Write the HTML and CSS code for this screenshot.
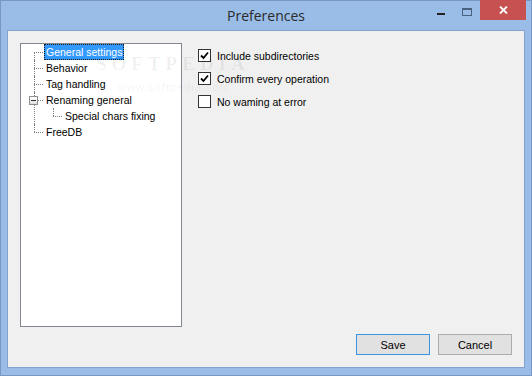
FILE: index.html
```html
<!DOCTYPE html>
<html lang="en">
  <head>
    <meta charset="UTF-8" />
    <title>Preferences</title>
    <link rel="stylesheet" href="styles.css">
  </head>
  <body>
    <div class="window">
      <!-- Title bar -->
      <div class="titlebar">
        <div></div>
        <div class="title">Preferences</div>
        <div class="controls">
          <div class="ctl ctl-min"><span class="dash"></span></div>
          <div class="ctl ctl-max"><span class="box"></span></div>
          <div class="ctl ctl-close">
            <svg width="9" height="8" viewBox="0 0 9 8">
              <path d="M1 0.5 L8 7.5 M8 0.5 L1 7.5" stroke="#fff" stroke-width="1.8" fill="none" />
            </svg>
          </div>
        </div>
      </div>

      <!-- Client area -->
      <div class="client">
        <div class="main">
          <ul class="tree">
            <li><span class="label selected">General settings</span></li>
            <li><span class="label">Behavior</span></li>
            <li><span class="label">Tag handling</span></li>
            <li>
              <span class="toggle"></span>
              <span class="label">Renaming general</span>
              <ul class="subtree">
                <li><span class="label">Special chars fixing</span></li>
              </ul>
            </li>
            <li><span class="label">FreeDB</span></li>
          </ul>

          <div class="options">
            <label class="check"><span class="box checked"></span>Include subdirectories</label>
            <label class="check"><span class="box checked"></span>Confirm every operation</label>
            <label class="check"><span class="box"></span>No waming at error</label>
          </div>
        </div>

        <div class="buttons">
          <button class="btn default">Save</button>
          <button class="btn">Cancel</button>
        </div>

        <!-- watermark -->
        <div class="watermark">
          <div class="wm-big">SOFTPEDIA</div>
          <div class="wm-small">www.softpedia.com</div>
        </div>
      </div>
    </div>
  </body>
</html>
```

FILE: styles.css
```css
body {
  margin: 0;
  font-family: "Liberation Sans", Arial, sans-serif;
  font-size: 10.5px;
}
.window {
  width: 532px;
  height: 376px;
  box-sizing: border-box;
  border: 1px solid #7996c4;
  background: #99bde7;
  display: flex;
  flex-direction: column;
}
.titlebar {
  height: 29px;
  display: grid;
  grid-template-columns: 1fr auto 1fr;
}
.title {
  font-family: "Open Sans", "Noto Sans", sans-serif;
  font-size: 14px;
  color: #2b2b2b;
  line-height: 29px;
}
.controls {
  display: flex;
  justify-content: flex-end;
  align-items: flex-start;
  margin-right: 5px;
}
.ctl {
  width: 26px;
  height: 20px;
  display: flex;
  align-items: center;
  justify-content: center;
}
.ctl-min .dash {
  width: 8px;
  height: 2px;
  margin-top: 6px;
  background: #222;
}
.ctl-max .box {
  width: 8px;
  height: 5px;
  border: 1px solid #4a6280;
  border-top-width: 2px;
  margin-top: 1px;
}
.ctl-close {
  width: 46px;
  height: 20px;
  margin-top: -1px;
  background: #c75050;
}
.client {
  position: relative;
  margin: 0 6px;
  flex: 1;
  border: 1px solid #83a3cf;
  background: #f0f0f0;
  padding: 12px;
  display: flex;
  flex-direction: column;
  margin-bottom: 7px;
}
.main {
  display: flex;
  height: 284px;
}
.tree {
  width: 162px;
  height: 284px;
  box-sizing: border-box;
  border: 1px solid #828790;
  background: #fff;
  margin: 0;
  padding: 0 0 0 13px;
  list-style: none;
  color: #000;
}
.tree li {
  position: relative;
  padding-left: 10px;
}
.tree li::before {
  content: "";
  position: absolute;
  left: 0;
  top: 8px;
  width: 9px;
  border-top: 1px dotted #808080;
}
.tree > li::after {
  content: "";
  position: absolute;
  left: 0;
  top: 0;
  bottom: 0;
  border-left: 1px dotted #808080;
}
.tree > li:first-child::after {
  top: 8px;
}
.tree > li:last-child::after {
  bottom: auto;
  height: 8px;
}
.label {
  display: inline-block;
  height: 16px;
  line-height: 16px;
  padding: 0 2px;
  box-sizing: border-box;
}
.label.selected {
  background: #3399ff;
  color: #fff;
  outline: 1px dotted #1a1a1a;
  outline-offset: -1px;
}
.toggle {
  position: absolute;
  left: -5px;
  top: 4px;
  width: 9px;
  height: 9px;
  box-sizing: border-box;
  border: 1px solid #8e8f8f;
  background: linear-gradient(#fff, #e0e0e0);
  z-index: 1;
}
.toggle::after {
  content: "";
  position: absolute;
  left: 1px;
  top: 3px;
  width: 5px;
  height: 1px;
  background: #333;
}
.subtree {
  list-style: none;
  margin: 0 0 0 9px;
  padding: 0;
}
.subtree li::after {
  content: "";
  position: absolute;
  left: 0;
  top: 0;
  height: 8px;
  border-left: 1px dotted #808080;
}
.options {
  display: flex;
  flex-direction: column;
  gap: 10px;
  padding: 6px 0 0 16px;
}
.check {
  display: flex;
  align-items: center;
  gap: 6px;
  height: 13px;
  color: #000;
}
.check .box {
  width: 13px;
  height: 13px;
  box-sizing: border-box;
  border: 1px solid #333;
  background: #fff;
}
.check .box.checked {
  background: #fff url("data:image/svg+xml,%3Csvg xmlns='http://www.w3.org/2000/svg' width='11' height='11'%3E%3Cpath d='M2 5.5 L4.5 8 L9 2.5' stroke='%23000' stroke-width='1.8' fill='none'/%3E%3C/svg%3E") no-repeat center;
}
.buttons {
  display: flex;
  justify-content: flex-end;
  gap: 8px;
  margin-top: 7px;
}
.btn {
  width: 74px;
  height: 21px;
  font-family: "Liberation Sans", Arial, sans-serif;
  font-size: 11px;
  color: #000;
  background: #e1e1e1;
  border: 1px solid #adadad;
  padding: 0;
}
.btn.default {
  border-color: #3c94e4;
}
.watermark {
  position: absolute;
  left: 88px;
  top: 22px;
  color: rgba(0, 0, 0, 0.06);
  pointer-events: none;
}
.wm-big {
  font-family: "Liberation Serif", serif;
  font-size: 19px;
  font-weight: bold;
  letter-spacing: 5px;
}
.wm-small {
  font-size: 11px;
  letter-spacing: 1px;
  margin: 6px 0 0 22px;
}
```
